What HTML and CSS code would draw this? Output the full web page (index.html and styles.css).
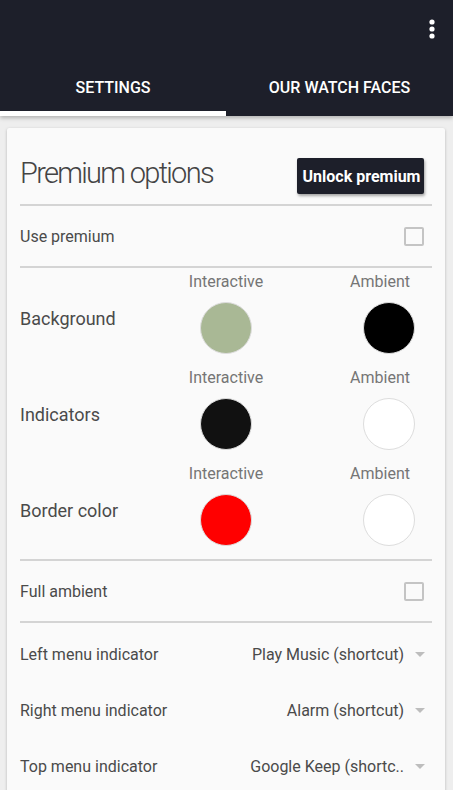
FILE: index.html
```html
<!DOCTYPE html>
<html>
<head>
<meta charset="utf-8">
<title>Watch face settings</title>
<link rel="stylesheet" href="styles.css">
</head>
<body>
<div class="appbar">
  <div class="toolbar">
    <svg class="overflow" width="8" height="22" viewBox="0 0 8 22"><circle cx="4" cy="4" r="2.6"/><circle cx="4" cy="11" r="2.6"/><circle cx="4" cy="18" r="2.6"/></svg>
  </div>
  <div class="tabs">
    <div class="tab active">SETTINGS</div>
    <div class="tab">OUR WATCH FACES</div>
  </div>
</div>

<div class="content">
  <div class="card">
    <div class="card-head">
      <h1>Premium options</h1>
      <button class="unlock">Unlock premium</button>
    </div>

    <div class="row check-row">
      <span class="label">Use premium</span>
      <span class="checkbox"></span>
    </div>

    <div class="colors">
      <div class="color-group">
        <span class="col-title mid">Interactive</span>
        <span class="col-title end">Ambient</span>
        <span class="big-label">Background</span>
        <span class="swatch mid" style="background:#a9b895"></span>
        <span class="swatch end" style="background:#000000"></span>
      </div>
      <div class="color-group">
        <span class="col-title mid">Interactive</span>
        <span class="col-title end">Ambient</span>
        <span class="big-label">Indicators</span>
        <span class="swatch mid" style="background:#111111"></span>
        <span class="swatch end" style="background:#ffffff"></span>
      </div>
      <div class="color-group">
        <span class="col-title mid">Interactive</span>
        <span class="col-title end">Ambient</span>
        <span class="big-label">Border color</span>
        <span class="swatch mid" style="background:#ff0000"></span>
        <span class="swatch end" style="background:#ffffff"></span>
      </div>
    </div>

    <div class="row check-row">
      <span class="label">Full ambient</span>
      <span class="checkbox"></span>
    </div>

    <div class="menus">
      <div class="row menu-row">
        <span class="label">Left menu indicator</span>
        <span class="select">Play Music (shortcut)<i class="arrow"></i></span>
      </div>
      <div class="row menu-row">
        <span class="label">Right menu indicator</span>
        <span class="select">Alarm (shortcut)<i class="arrow"></i></span>
      </div>
      <div class="row menu-row">
        <span class="label">Top menu indicator</span>
        <span class="select">Google Keep (shortc..<i class="arrow"></i></span>
      </div>
    </div>
  </div>
</div>
</body>
</html>
```

FILE: styles.css
```css
/* Watch face companion settings */

html, body
{ margin: 0;
padding: 0;
height: 790px;
overflow: hidden;
}

body
{ background: #eeeeee;
font-family: Roboto, "Noto Sans", sans-serif;
color: #4a4a4a;
}

/* App bar */

.appbar
{ background: #1d1f2a;
box-shadow: 0 2px 4px rgba(0,0,0,0.25);
position: relative;
z-index: 2;
}

.toolbar
{ height: 56px;
display: flex;
justify-content: flex-end;
align-items: flex-start;
padding-right: 17px;
}

.overflow
{ fill: #ffffff;
margin-top: 18px;
}

.tabs
{ display: flex;
height: 60px;
}

.tab
{ flex: 0 0 226px;
display: flex;
align-items: center;
justify-content: center;
color: #ffffff;
font-size: 16px;
font-weight: 500;
box-sizing: border-box;
padding-top: 3px;
}

.tab + .tab
{ flex: 1;
}

.tab.active
{ border-bottom: 5px solid #ffffff;
padding-top: 8px;
}

/* Card */

.content
{ padding: 12px 8px 0 7px;
}

.card
{ background: #fafafa;
border-radius: 2px;
box-shadow: 0 1px 3px rgba(0,0,0,0.25);
padding: 0 13px 40px 13px;
}

.card-head
{ display: flex;
justify-content: space-between;
align-items: center;
height: 76px;
border-bottom: 2px solid #d4d4d4;
}

h1
{ margin: 0;
font-size: 29px;
font-weight: 300;
letter-spacing: -1.7px;
color: #444444;
padding-top: 13px;
}

.unlock
{ background: #1d1f2a;
color: #ffffff;
border: none;
border-radius: 2px;
font-family: Roboto, "Noto Sans", sans-serif;
font-size: 16px;
font-weight: 700;
width: 127px;
height: 36px;
padding: 0 0 0 2px;
margin-right: 8px;
margin-top: 20px;
box-shadow: 1px 2px 3px rgba(0,0,0,0.35);
}

.row
{ display: flex;
justify-content: space-between;
align-items: center;
}

.label
{ font-size: 16px;
}

.check-row
{ height: 60px;
border-bottom: 2px solid #d4d4d4;
}

.checkbox
{ width: 16px;
height: 15px;
border: 2px solid #c4c4c4;
border-radius: 2px;
margin-right: 8px;
}

/* Colour pickers */

.colors
{ padding-bottom: 3px;
border-bottom: 2px solid #d4d4d4;
}

.color-group
{ display: grid;
grid-template-columns: 154px 104px 1fr;
grid-template-rows: 26px 70px;
align-items: center;
}

.col-title
{ font-size: 16px;
color: #757575;
grid-row: 1;
}

.col-title.mid
{ grid-column: 2;
justify-self: center;
}

.col-title.end
{ grid-column: 3;
justify-self: end;
margin-right: 22px;
}

.big-label
{ grid-row: 2;
grid-column: 1;
font-size: 18px;
align-self: start;
padding-top: 14px;
}

.swatch
{ grid-row: 2;
width: 50px;
height: 50px;
border-radius: 50%;
border: 1px solid #dddddd;
margin-top: -3px;
}

.swatch.mid
{ grid-column: 2;
justify-self: center;
}

.swatch.end
{ grid-column: 3;
justify-self: end;
margin-right: 17px;
}

/* Dropdowns */

.menus
{ padding-top: 3px;
}

.menu-row
{ height: 56px;
}

.select
{ font-size: 16px;
display: flex;
align-items: center;
}

.arrow
{ width: 0;
height: 0;
border-left: 5px solid transparent;
border-right: 5px solid transparent;
border-top: 5px solid #bdbdbd;
margin-left: 11px;
margin-right: 7px;
}
```
